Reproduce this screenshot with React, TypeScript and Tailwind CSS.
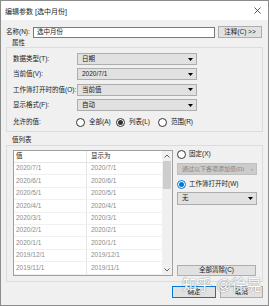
import React from 'react';

const dates = [
  '2020/7/1',
  '2020/6/1',
  '2020/5/1',
  '2020/4/1',
  '2020/3/1',
  '2020/2/1',
  '2020/1/1',
  '2019/12/1',
  '2019/11/1',
];

const Radio = ({ checked, blue }: { checked?: boolean; blue?: boolean }) => (
  <span
    className={`flex h-[9px] w-[9px] shrink-0 items-center justify-center rounded-full border bg-white ${
      blue ? 'border-[#0078d7]' : 'border-[#333333]'
    }`}
  >
    {checked && <span className={`h-[5px] w-[5px] rounded-full ${blue ? 'bg-[#0078d7]' : 'bg-[#333333]'}`} />}
  </span>
);

const Combo = ({ value, className }: { value: string; className: string }) => (
  <div className={`flex items-center justify-between border border-[#adadad] bg-[#e1e1e1] pl-[4px] pr-[3px] ${className}`}>
    <span>{value}</span>
    <svg width="5" height="3" viewBox="0 0 5 3">
      <path d="M0 0h5L2.5 3z" fill="#000" />
    </svg>
  </div>
);

const Chevron = ({ up }: { up?: boolean }) => (
  <svg width="6" height="4" viewBox="0 0 6 4">
    <path d={up ? 'M0.5 3.5L3 1l2.5 2.5' : 'M0.5 0.5L3 3l2.5-2.5'} stroke="#606060" fill="none" strokeWidth="1" />
  </svg>
);

const fieldRows = [
  { label: '数据类型(T):', value: '日期' },
  { label: '当前值(V):', value: '2020/7/1' },
  { label: '工作簿打开时的值(O):', value: '当前值' },
  { label: '显示格式(F):', value: '自动' },
];

export default function App() {
  return (
    <div className="relative flex h-[306px] w-[269px] flex-col border border-[#8c8c8c] bg-[#f0f0f0] font-['Liberation_Sans','Noto_Sans_CJK_SC',sans-serif] text-[6.5px] leading-none text-[#1a1a1a]">
      {/* title bar */}
      <div className="flex h-[19px] items-center justify-between bg-white pl-[4px] pr-[7px] pt-[2px]">
        <span className="text-[7px]">编辑参数 [选中月份]</span>
        <svg width="7" height="7" viewBox="0 0 7 7" className="-mt-[3px]">
          <path d="M0.5 0.5l6 6M6.5 0.5l-6 6" stroke="#333" strokeWidth="0.8" />
        </svg>
      </div>

      <div className="flex flex-1 flex-col px-[5px] pt-[6px]">
        {/* name */}
        <div className="flex h-[12px] items-center">
          <span className="w-[27px] whitespace-nowrap">名称(N):</span>
          <div className="flex h-[11px] w-[182px] items-center border border-[#7a7a7a] bg-white pl-[3px]">选中月份</div>
          <button className="ml-[3px] flex h-[12px] w-[44px] items-center justify-center whitespace-nowrap border border-[#adadad] bg-[#e1e1e1]">
            注释(C) &gt;&gt;
          </button>
        </div>

        {/* 属性 */}
        <div className="flex h-[9px] items-center pl-[6px] pt-[1px]">属性</div>
        <div className="flex h-[85px] flex-col border border-[#dcdcdc] pl-[6px] pt-[5px]">
          <div className="flex flex-col gap-[3.4px]">
            {fieldRows.map((r) => (
              <div key={r.label} className="flex h-[12px] items-center">
                <span className="w-[64px] whitespace-nowrap">{r.label}</span>
                <Combo value={r.value} className="h-[12px] w-[120px]" />
              </div>
            ))}
          </div>
          <div className="mt-[5px] flex h-[12px] items-center">
            <span className="w-[63px] whitespace-nowrap">允许的值:</span>
            <Radio />
            <span className="ml-[4px] w-[27px] whitespace-nowrap">全部(A)</span>
            <Radio checked />
            <span className="ml-[4px] w-[29px] whitespace-nowrap">列表(L)</span>
            <Radio />
            <span className="ml-[4px] whitespace-nowrap">范围(R)</span>
          </div>
        </div>

        {/* 值列表 */}
        <div className="mt-[4px] flex h-[9px] items-center pl-[6px]">值列表</div>
        <div className="flex h-[137px] border border-[#dcdcdc] pl-[6px] pr-[4px] pt-[4px]">
          <div className="flex h-[126px] w-[160px] border border-[#a0a0a0] bg-white">
            <div className="flex flex-1 flex-col">
              <div className="flex h-[12px] items-center border-b border-[#e5e5e5]">
                <span className="flex h-full w-[73px] items-center border-r border-[#e5e5e5] pl-[2px]">值</span>
                <span className="pl-[4px]">显示为</span>
              </div>
              {dates.map((d) => (
                <div key={d} className="flex h-[12.4px] items-center border-b border-[#f0f0f0] text-[#8a8a8a]">
                  <span className="flex h-full w-[73px] items-center border-r border-[#e5e5e5] pl-[2px]">{d}</span>
                  <span className="pl-[4px]">{d}</span>
                </div>
              ))}
            </div>
            <div className="flex w-[10px] flex-col items-center bg-[#f0f0f0]">
              <div className="flex h-[10px] items-center">
                <Chevron up />
              </div>
              <div className="h-[28px] w-[8px] bg-[#cdcdcd]" />
              <div className="flex-1" />
              <div className="flex h-[10px] items-center">
                <Chevron />
              </div>
            </div>
          </div>

          <div className="ml-[4px] flex h-[126px] w-[80px] flex-col">
            <div className="flex h-[9px] items-center gap-[3px]">
              <Radio />
              <span>固定(X)</span>
            </div>
            <div className="mt-[4px] flex h-[12px] items-center justify-between whitespace-nowrap border border-[#bfbfbf] bg-[#cccccc] pl-[4px] pr-[3px] text-[6px] text-[#838383]">
              <span>通过以下各项添加值(D)</span>
              <span>›</span>
            </div>
            <div className="mt-[4px] flex h-[10px] items-center gap-[3px]">
              <Radio checked blue />
              <span className="whitespace-nowrap">工作簿打开时(W)</span>
            </div>
            <Combo value="无" className="mt-[3px] h-[13px] w-[80px]" />
            <div className="flex-1" />
            <button className="flex h-[11px] w-[79px] items-center justify-center whitespace-nowrap border border-[#adadad] bg-[#e1e1e1]">
              全部清除(C)
            </button>
          </div>
        </div>

        {/* buttons */}
        <div className="mt-[4px] flex justify-end gap-[4px]">
          <button className="flex h-[12px] w-[44px] items-center justify-center border border-[#0078d7] bg-[#e1e1e1]">确定</button>
          <button className="flex h-[12px] w-[43px] items-center justify-center border border-[#adadad] bg-[#e1e1e1]">取消</button>
        </div>
      </div>

      {/* watermark */}
      <div className="absolute left-[181px] top-[276px] whitespace-nowrap text-[15px] leading-none text-white [text-shadow:0_0_1px_#8a8a8a,0_0_1px_#8a8a8a]">
        知乎 @徐晃
      </div>
    </div>
  );
}
